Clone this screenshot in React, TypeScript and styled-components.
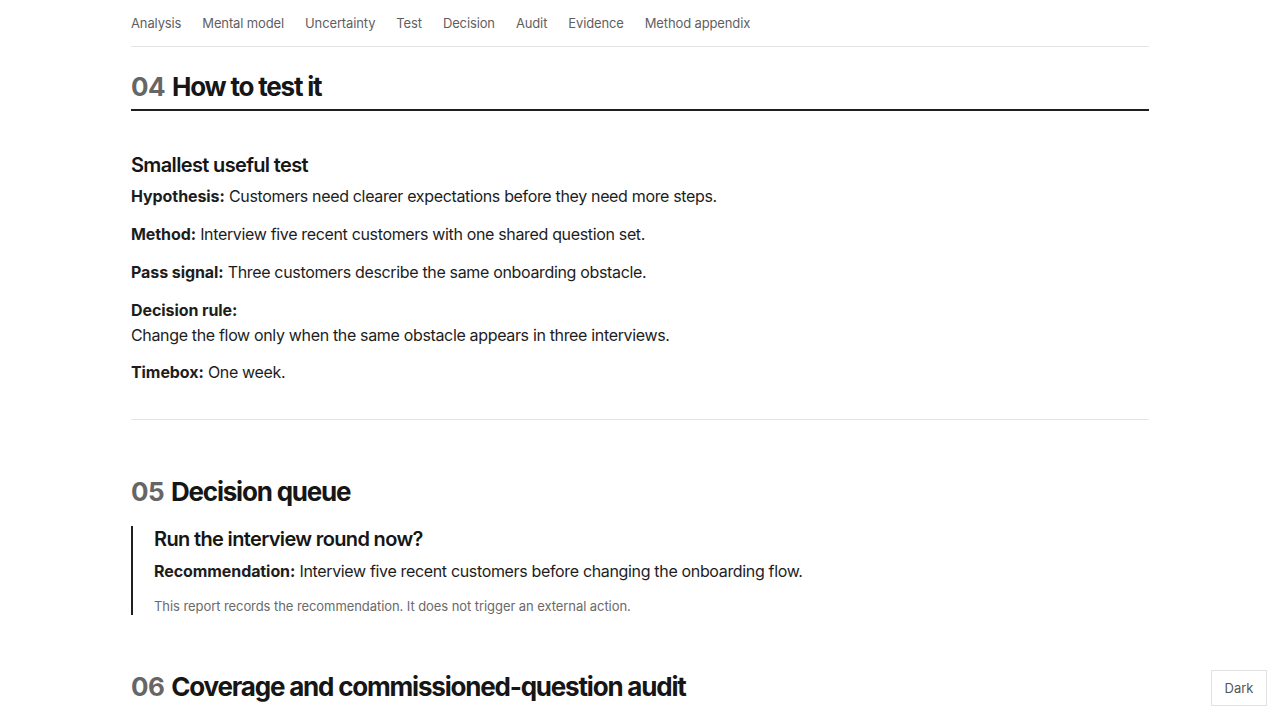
import React from "react";
import styled, { createGlobalStyle } from "styled-components";

const Global = createGlobalStyle`
  html, body { margin: 0; padding: 0; background: #ffffff; }
  body {
    font-family: Inter, "Noto Sans", "Liberation Sans", sans-serif;
    color: #161616;
    -webkit-font-smoothing: antialiased;
  }
  * { box-sizing: border-box; }
`;

const Page = styled.div`
  width: 1018px;
  margin: 0 auto;
`;

const Nav = styled.nav`
  display: flex;
  gap: 21px;
  padding: 14px 0;
  border-bottom: 1px solid #e4e4e4;
`;

const NavLink = styled.a`
  font-size: 13px;
  line-height: 18px;
  letter-spacing: -0.13px;
  color: #5f5f5f;
  text-decoration: none;
`;

const Section = styled.section<{ $rule?: boolean }>`
  padding-bottom: ${(p) => (p.$rule ? "35px" : "0")};
  border-bottom: ${(p) => (p.$rule ? "1px solid #e4e4e4" : "none")};
`;

const SectionTitle = styled.h2<{ $underline?: boolean; $top: number }>`
  margin: ${(p) => p.$top}px 0 0;
  font-size: 26px;
  line-height: 31px;
  font-weight: 700;
  letter-spacing: -1.2px;
  color: #161616;
  padding-bottom: ${(p) => (p.$underline ? "7px" : "0")};
  border-bottom: ${(p) => (p.$underline ? "2px solid #1f1f1f" : "none")};
`;

const Num = styled.span`
  color: #666666;
  letter-spacing: -0.6px;
  margin-right: 7px;
`;

const SubTitle = styled.h3<{ $top: number }>`
  margin: ${(p) => p.$top}px 0 0;
  font-size: 20px;
  line-height: 26px;
  font-weight: 600;
  letter-spacing: -0.65px;
  color: #161616;
`;

const Para = styled.p<{ $top: number }>`
  margin: ${(p) => p.$top}px 0 0;
  font-size: 16px;
  line-height: 24px;
  letter-spacing: -0.34px;
  color: #1d1d1d;
`;

const Label = styled.strong<{ $block?: boolean }>`
  font-weight: 700;
  letter-spacing: -0.08px;
  display: ${(p) => (p.$block ? "block" : "inline")};
  margin-bottom: ${(p) => (p.$block ? "1px" : "0")};
`;

const Queue = styled.div`
  margin-top: 19px;
  border-left: 2px solid #1f1f1f;
  padding: 0 0 0 21px;
`;

const Note = styled.p`
  margin: 14px 0 0;
  font-size: 13px;
  line-height: 18px;
  letter-spacing: -0.07px;
  color: #6a6a6a;
`;

const Lead = styled.p`
  margin: 14px 0 0;
  font-size: 16px;
  line-height: 24px;
  letter-spacing: -0.34px;
  color: #6a6a6a;
`;

const ThemeButton = styled.button`
  position: fixed;
  right: 13px;
  bottom: 14px;
  width: 56px;
  height: 36px;
  background: #ffffff;
  border: 1px solid #e2e2e2;
  font-family: Inter, "Noto Sans", sans-serif;
  font-size: 13px;
  color: #555555;
  cursor: pointer;
`;

const navItems = [
  "Analysis",
  "Mental model",
  "Uncertainty",
  "Test",
  "Decision",
  "Audit",
  "Evidence",
  "Method appendix",
];

export default function App() {
  return (
    <>
      <Global />
      <Page>
        <Nav>
          {navItems.map((n) => (
            <NavLink key={n} href="#">
              {n}
            </NavLink>
          ))}
        </Nav>

        <Section $rule>
          <SectionTitle $underline $top={24}>
            <Num>04</Num>How to test it
          </SectionTitle>
          <SubTitle $top={41}>Smallest useful test</SubTitle>
          <Para $top={6}>
            <Label>Hypothesis:</Label> Customers need clearer expectations before they need more steps.
          </Para>
          <Para $top={14}>
            <Label>Method:</Label> Interview five recent customers with one shared question set.
          </Para>
          <Para $top={14}>
            <Label>Pass signal:</Label> Three customers describe the same onboarding obstacle.
          </Para>
          <Para $top={14}>
            <Label $block>Decision rule:</Label>
            Change the flow only when the same obstacle appears in three interviews.
          </Para>
          <Para $top={13}>
            <Label>Timebox:</Label> One week.
          </Para>
        </Section>

        <Section>
          <SectionTitle $top={56}>
            <Num>05</Num>Decision queue
          </SectionTitle>
          <Queue>
            <SubTitle $top={0}>Run the interview round now?</SubTitle>
            <Para $top={7}>
              <Label>Recommendation:</Label> Interview five recent customers before changing the onboarding flow.
            </Para>
            <Note>This report records the recommendation. It does not trigger an external action.</Note>
          </Queue>
        </Section>

        <Section>
          <SectionTitle $top={56}>
            <Num>06</Num>Coverage and commissioned-question audit
          </SectionTitle>
          <Lead>The evidence supports interviews first; the new flow remains untested.</Lead>
        </Section>
      </Page>
      <ThemeButton>Dark</ThemeButton>
    </>
  );
}
